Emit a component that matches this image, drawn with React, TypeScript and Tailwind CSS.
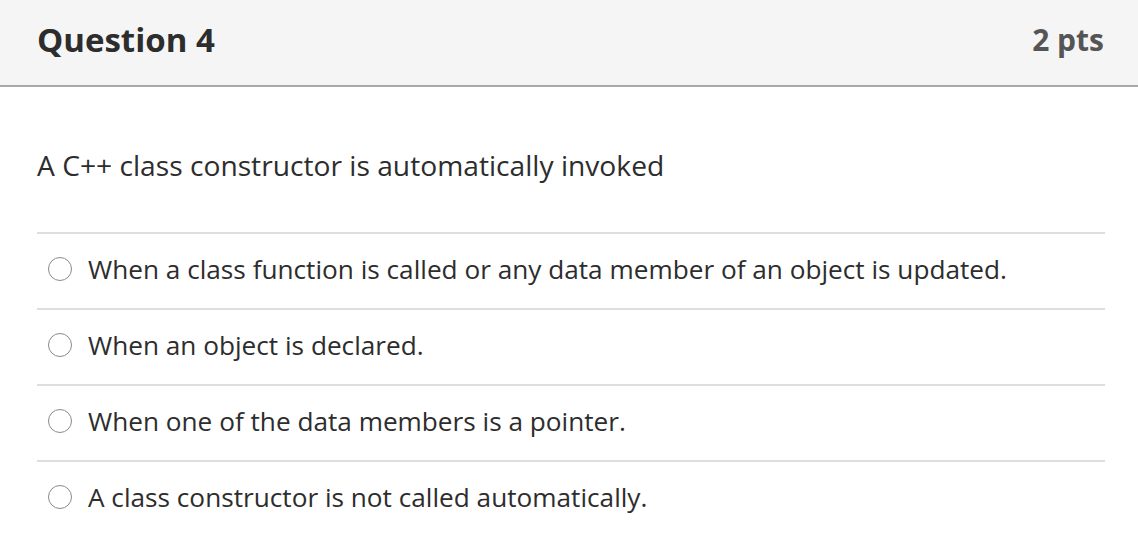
const answers = [
  "When a class function is called or any data member of an object is updated.",
  "When an object is declared.",
  "When one of the data members is a pointer.",
  "A class constructor is not called automatically.",
];

function Radio() {
  return (
    <span className="inline-block h-[24px] w-[24px] shrink-0 rounded-full border border-[#8a8a8a] bg-white" />
  );
}

export default function App() {
  return (
    <div
      className="min-h-[560px] w-[1138px] bg-white text-[#2d2d2d]"
      style={{ fontFamily: "'Open Sans', 'Liberation Sans', sans-serif" }}
    >
      <div className="flex h-[87px] items-center justify-between border-b-2 border-[#a8a8a8] bg-[#f5f5f5] pl-[37px] pr-[34px] pb-[6px]">
        <h2 className="text-[33px] font-bold">Question 4</h2>
        <span className="text-[30px] font-bold text-[#555]">2 pts</span>
      </div>
      <div className="pl-[37px] pr-[33px]">
        <p className="pt-[58px] text-[28.2px] leading-[40px]">A C++ class constructor is automatically invoked</p>
        <div className="mt-[47px]">
          {answers.map((a) => (
            <div
              key={a}
              className="flex h-[76px] items-center gap-[16px] border-t-2 border-[#dedede] pb-[5px] pl-[11px]"
            >
              <Radio />
              <span className="text-[26.2px] leading-[36px]">{a}</span>
            </div>
          ))}
        </div>
      </div>
    </div>
  );
}
